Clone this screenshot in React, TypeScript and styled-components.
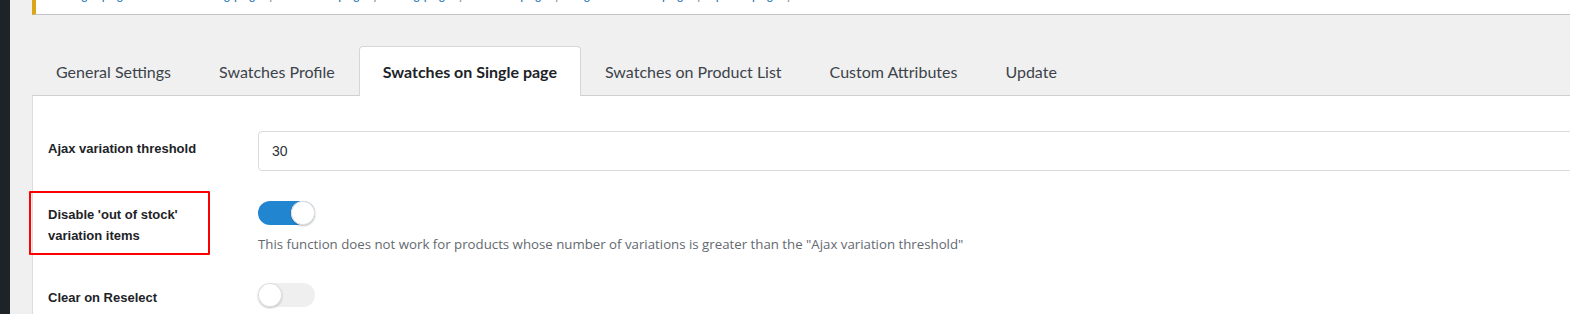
import React, { useState } from 'react'
import styled, { createGlobalStyle } from 'styled-components'

const GlobalStyle = createGlobalStyle`
	html, body {
		margin: 0;
		padding: 0;
		background: #f0f0f0;
		overflow: hidden;
	}
	* {
		box-sizing: border-box;
	}
`

const Page = styled.div`
	display: flex;
	width: 1570px;
	height: 314px;
	overflow: hidden;
	background: #f0f0f0;
`

const Sidebar = styled.div`
	width: 10px;
	flex-shrink: 0;
	background: #1d2327;
`

const Main = styled.div`
	flex-shrink: 0;
	width: 1600px;
	padding-left: 22px;
`

const Notice = styled.div`
	height: 15px;
	background: #fff;
	border-left: 4px solid #dba617;
	border-bottom: 1px solid #c3c4c7;
	overflow: hidden;
	padding-left: 26px;
`

const NoticeLinks = styled.div`
	margin-top: -15px;
	line-height: 20px;
	font-family: 'Liberation Sans', Arial, sans-serif;
	font-size: 13px;
	color: #2271b1;
	white-space: nowrap;
`

const Sep = styled.span`
	color: #8c8f94;
	margin: 0 6px;
`

const TabBar = styled.ul`
	list-style: none;
	display: flex;
	margin: 31px 0 0;
	padding: 0;
	position: relative;
	z-index: 1;
`

const Tab = styled.li<{ $active?: boolean }>`
	padding: 0 23px;
	height: 50px;
	display: flex;
	align-items: center;
	font-family: Lato, 'Liberation Sans', sans-serif;
	font-size: 16px;
	font-weight: ${p => (p.$active ? 700 : 400)};
	color: ${p => (p.$active ? '#1d2327' : '#3c434a')};
	background: ${p => (p.$active ? '#fff' : 'transparent')};
	border: 1px solid ${p => (p.$active ? '#d6d6d6' : 'transparent')};
	border-bottom: none;
	border-radius: 4px 4px 0 0;
	margin-bottom: -1px;
	cursor: pointer;
`

const Panel = styled.div`
	background: #fff;
	border-top: 1px solid #d0d0d0;
	border-left: 1px solid #dcdcdc;
	padding: 35px 0 0 15px;
	height: 240px;
`

const Row = styled.div<{ $center?: boolean }>`
	display: grid;
	grid-template-columns: 210px 1fr;
	align-items: ${p => (p.$center ? 'center' : 'start')};
	padding-bottom: 30px;
`

const Label = styled.div<{ $shift?: number }>`
	position: relative;
	font-family: 'Liberation Sans', Arial, sans-serif;
	font-size: 13px;
	font-weight: 700;
	line-height: 21px;
	color: #1d2327;
	margin-top: ${p => p.$shift ?? 0}px;
`

const Highlight = styled.span`
	position: absolute;
	left: -19px;
	top: -13px;
	width: 181px;
	height: 64px;
	border: 2px solid #ff0000;
	border-radius: 1px;
	pointer-events: none;
`

const Field = styled.div`
	display: flex;
	flex-direction: column;
	align-items: flex-start;
`

const Input = styled.input`
	width: 100%;
	height: 40px;
	border: 1px solid #dcdcdc;
	border-radius: 4px;
	padding: 0 13px;
	font-family: 'Liberation Sans', Arial, sans-serif;
	font-size: 14px;
	color: #2c3338;
	outline: none;
`

const Toggle = styled.button<{ $on: boolean }>`
	position: relative;
	width: 57px;
	height: 24px;
	padding: 0;
	border: none;
	border-radius: 12px;
	background: ${p => (p.$on ? '#2185d0' : '#efefef')};
	cursor: pointer;

	&::after {
		content: '';
		position: absolute;
		top: 0;
		left: ${p => (p.$on ? '33px' : '0')};
		width: 24px;
		height: 24px;
		border-radius: 50%;
		background: #fff;
		box-shadow: 0 1px 2px rgba(0, 0, 0, 0.25), inset 0 0 0 1px #ddd;
	}
`

const Description = styled.p`
	margin: 10px 0 0;
	font-family: 'Open Sans', 'Liberation Sans', sans-serif;
	font-size: 13.25px;
	color: #646970;
`

const tabs = [
	'General Settings',
	'Swatches Profile',
	'Swatches on Single page',
	'Swatches on Product List',
	'Custom Attributes',
	'Update'
]

const App = () => {
	const [active, setActive] = useState(2)
	const [disableOut, setDisableOut] = useState(true)
	const [clearOn, setClearOn] = useState(false)

	return (
		<Page>
			<GlobalStyle />
			<Sidebar />
			<Main>
				<Notice>
					<NoticeLinks>
						Single page swatches setting page<Sep>|</Sep>Swatches page
						<Sep>|</Sep>Listing page<Sep>|</Sep>Attribute page
						<Sep>|</Sep>Single swatches page<Sep>|</Sep>Update page
						<Sep>|</Sep>
					</NoticeLinks>
				</Notice>
				<TabBar>
					{tabs.map((t, i) => (
						<Tab key={t} $active={i === active} onClick={() => setActive(i)}>
							{t}
						</Tab>
					))}
				</TabBar>
				<Panel>
					<Row $center>
						<Label $shift={-6}>Ajax variation threshold</Label>
						<Input defaultValue="30" />
					</Row>
					<Row>
						<Label $shift={3}>
							<Highlight />
							Disable 'out of stock'
							<br />
							variation items
						</Label>
						<Field>
							<Toggle $on={disableOut} onClick={() => setDisableOut(!disableOut)} />
							<Description>
								This function does not work for products whose number of variations is
								greater than the "Ajax variation threshold"
							</Description>
						</Field>
					</Row>
					<Row>
						<Label $shift={4}>Clear on Reselect</Label>
						<Field>
							<Toggle $on={clearOn} onClick={() => setClearOn(!clearOn)} />
						</Field>
					</Row>
				</Panel>
			</Main>
		</Page>
	)
}

export default App
